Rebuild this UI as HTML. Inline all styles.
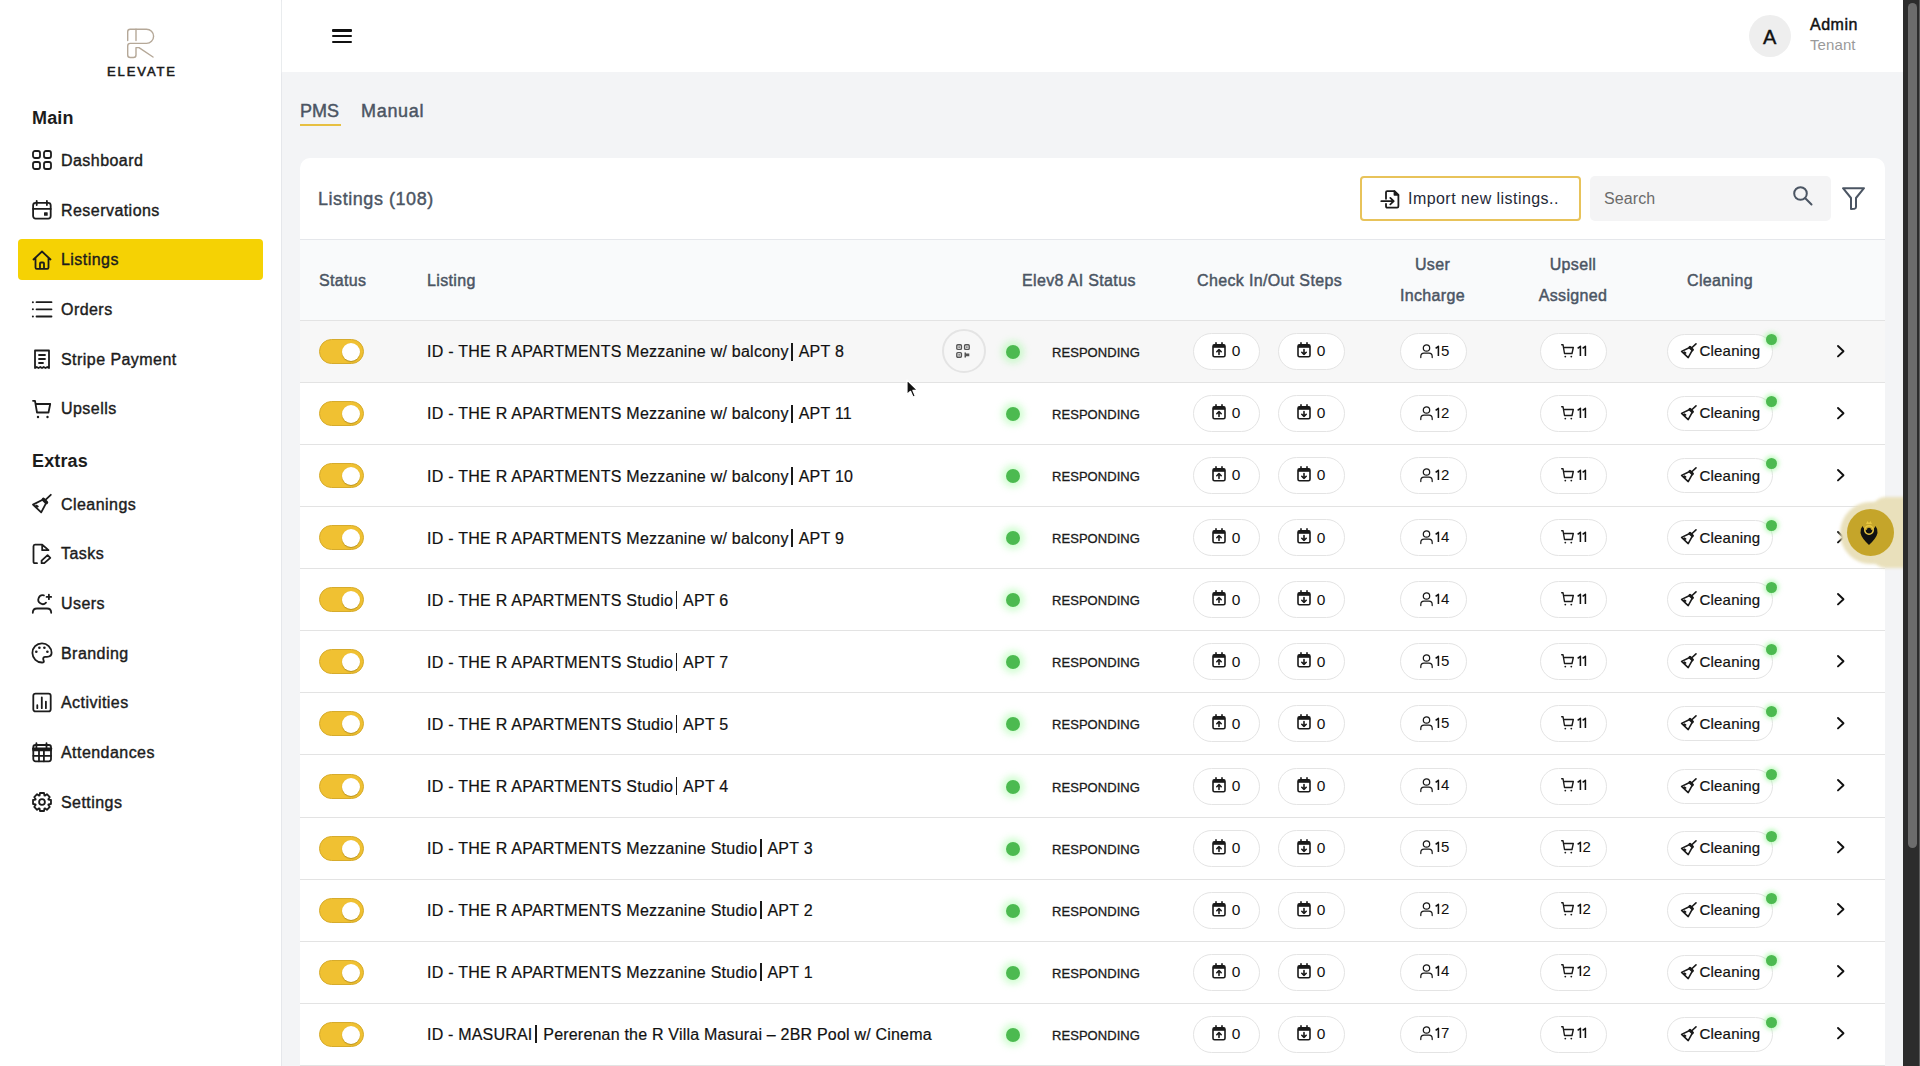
<!DOCTYPE html><html><head><meta charset="utf-8"><style>
*{box-sizing:border-box;margin:0;padding:0}
html,body{width:1920px;height:1066px;overflow:hidden;background:#f3f4f6;font-family:"Liberation Sans", sans-serif;}
.a{position:absolute;white-space:nowrap;line-height:1}
.bl{display:inline-block;line-height:0;vertical-align:baseline}
.ic{position:absolute;overflow:visible}
#sb{position:absolute;left:0;top:0;width:282px;height:1066px;background:#fff;border-right:1px solid #e5e7eb}
#tb{position:absolute;left:282px;top:0;width:1621px;height:72px;background:#fff;box-shadow:0 1px 2px rgba(243,244,246,1)}
#scr{position:absolute;left:1903px;top:0;width:17px;height:1066px;background:#2c2c2c;border-right:1px solid #5c5c5c}
#thumb{position:absolute;left:5px;top:3px;width:9px;height:845px;border-radius:5px;background:#6c6c6c}
.nav{font-size:16px;letter-spacing:.45px;color:#1c1c1c;-webkit-text-stroke:.4px #1c1c1c}
.sec{font-size:18px;font-weight:bold;color:#1c1c1c;letter-spacing:.15px}
#card{position:absolute;left:300px;top:158px;width:1585px;height:1000px;background:#fff;border-radius:10px}
.th{font-size:16px;letter-spacing:.35px;color:#4b5563;-webkit-text-stroke:.45px #4b5563}
.row{position:absolute;left:300px;width:1585px;height:62px;border-bottom:1px solid #e3e3e3;background:#fff}
.tog{position:absolute;left:19px;top:18px;width:45px;height:25px;border-radius:13px;background:#f0c132;border:1px solid #d6ab2c}
.tog i{position:absolute;left:22px;top:3px;width:18px;height:18px;border-radius:50%;background:#fff;box-shadow:0 1px 1px rgba(120,90,0,.45)}
.nm{font-size:16px;letter-spacing:.3px;color:#111;-webkit-text-stroke:.2px #111}
.pp{display:inline-block;width:1.6px;height:18px;background:#1a1a1a;vertical-align:baseline;margin:-18px 2px 0 2.5px;position:relative;top:3.2px}
.dot{position:absolute;left:706px;top:24px;width:14px;height:14px;border-radius:50%;background:#4cba50;box-shadow:0 0 7px 4px rgba(150,250,150,.45)}
.resp{font-size:13px;color:#1a1a1a;letter-spacing:.05px;-webkit-text-stroke:.3px #1a1a1a}
.pill{position:absolute;top:12px;height:37px;width:67px;border:1px solid #e4e4e4;border-radius:19px;background:#fff}
.pt{font-size:14.5px;color:#111}
.cl{position:absolute;left:1367px;top:13px;width:106px;height:35px;border:1px solid #e4e4e4;border-radius:18px;background:#fff}
.gd{position:absolute;left:1466px;top:13px;width:11px;height:11px;border-radius:50%;background:#4cba50;box-shadow:0 0 4px 2px rgba(130,245,130,.5)}
</style></head><body>
<div id="sb"></div>
<svg class="ic" style="left:120px;top:24px;width:40px;height:38px" viewBox="0 0 40 38"><g fill="none" stroke="#b5a898" stroke-width="1.4" stroke-linecap="round" stroke-linejoin="round"><path d="M7.7,16.6 V7.7 Q7.7,5.2 10.2,5.2 H26.5 A7.1,7.1 0 0 1 26.5,19.4 H10.2 Q7.7,19.4 7.7,21.9 V31 Q7.7,33.5 10.2,33.5 H13.5 Q16,33.5 16,31 V23.6 H19 L33,33"/><path d="M16,5.2 V16.6"/></g></svg>
<div class="a" style="left:107px;top:64.88px;font-size:13.0px;font-size:13px;letter-spacing:1.9px;color:#1a1a1a;-webkit-text-stroke:.55px #1a1a1a">ELEVATE</div>
<div class="a sec" style="left:32px;top:108.88px;font-size:18px;">Main</div>
<div class="a sec" style="left:32px;top:451.88px;font-size:18px;">Extras</div>
<div style="position:absolute;left:18px;top:239px;width:245px;height:41px;border-radius:4px;background:#f5d204"></div>
<svg class="ic" style="left:32px;top:150.4px;width:20px;height:20px" viewBox="0 0 20 20"><g fill="none" stroke="#1c1c1c" stroke-width="1.8" stroke-linecap="round" stroke-linejoin="round"><rect x="1" y="1" width="7" height="7" rx="2"/><rect x="12" y="1" width="7" height="7" rx="2"/><rect x="1" y="12" width="7" height="7" rx="2"/><rect x="12" y="12" width="7" height="7" rx="2"/></g></svg>
<div class="a nav" style="left:61px;top:152.96px;font-size:16px;">Dashboard</div>
<svg class="ic" style="left:32px;top:200.1px;width:20px;height:20px" viewBox="0 0 20 20"><g fill="none" stroke="#1c1c1c" stroke-width="1.8" stroke-linecap="round" stroke-linejoin="round"><rect x="1.1" y="2.9" width="17.6" height="15.7" rx="2.5"/><path d="M4.7,0.8V5M14.9,0.8V5M1.1,8.9H18.7"/></g><rect x="12" y="12.2" width="3.7" height="3.6" rx=".6" fill="#1c1c1c"/></svg>
<div class="a nav" style="left:61px;top:202.66px;font-size:16px;">Reservations</div>
<svg class="ic" style="left:32px;top:249.8px;width:20px;height:20px" viewBox="0 0 20 20"><g fill="none" stroke="#1c1c1c" stroke-width="1.8" stroke-linecap="round" stroke-linejoin="round"><path d="M1.5,9.5 L10,1.5 L18.5,9.5 M3.5,7.8 V17.5 Q3.5,18.8 4.8,18.8 H15.2 Q16.5,18.8 16.5,17.5 V7.8 M8,18.8 V13.5 Q8,12.5 9,12.5 H11 Q12,12.5 12,13.5 V18.8"/></g></svg>
<div class="a nav" style="left:61px;top:252.36px;font-size:16px;">Listings</div>
<svg class="ic" style="left:32px;top:299.5px;width:20px;height:20px" viewBox="0 0 20 20"><g fill="none" stroke="#1c1c1c" stroke-width="1.8" stroke-linecap="round" stroke-linejoin="round"><path d="M4.5,2.2H19.5M4.5,9.3H19.5M4.5,16.5H19.5"/></g><g fill="#1c1c1c"><circle cx="0.9" cy="2.2" r="1"/><circle cx="0.9" cy="9.3" r="1"/><circle cx="0.9" cy="16.5" r="1"/></g></svg>
<div class="a nav" style="left:61px;top:302.06px;font-size:16px;">Orders</div>
<svg class="ic" style="left:32px;top:349.2px;width:20px;height:20px" viewBox="0 0 20 20"><g fill="none" stroke="#1c1c1c" stroke-width="1.8" stroke-linecap="round" stroke-linejoin="round"><path d="M3,1.5 H17 V19 L15.3,18 L13.5,19 L11.7,18 L10,19 L8.3,18 L6.5,19 L4.7,18 L3,19 Z M7,6H13M7,10H13M7,14H11"/></g></svg>
<div class="a nav" style="left:61px;top:351.76px;font-size:16px;">Stripe Payment</div>
<svg class="ic" style="left:32px;top:398.9px;width:20px;height:20px" viewBox="0 0 20 20"><g fill="none" stroke="#1c1c1c" stroke-width="1.8" stroke-linecap="round" stroke-linejoin="round"><path d="M1,1.8 H3 L5,13.5 H16.5 L18.2,5 H3.8"/></g><g fill="#1c1c1c"><circle cx="6" cy="18" r="1.2"/><circle cx="15.5" cy="18" r="1.2"/></g></svg>
<div class="a nav" style="left:61px;top:401.46px;font-size:16px;">Upsells</div>
<svg class="ic" style="left:32px;top:494.0px;width:20px;height:20px" viewBox="0 0 20 20"><g fill="none" stroke="#1c1c1c" stroke-width="1.8" stroke-linecap="round" stroke-linejoin="round"><path d="M18.8,0.8 L13.2,6.2 M11.6,5.2 L14.6,8.2 L9.2,18.4 L1,10.6 Z M4.3,11.6 L5.8,12.6"/><path d="M11.4,5.4 L14.4,8.4" stroke-width="3.6"/></g></svg>
<div class="a nav" style="left:61px;top:496.56px;font-size:16px;">Cleanings</div>
<svg class="ic" style="left:32px;top:543.7px;width:20px;height:20px" viewBox="0 0 20 20"><g fill="none" stroke="#1c1c1c" stroke-width="1.8" stroke-linecap="round" stroke-linejoin="round"><path d="M5,19.2 H3 Q1.5,19.2 1.5,17.7 V2.2 Q1.5,0.6 3,0.6 H10.2 L16.5,6.2 H10.2 V0.6"/><path d="M9.6,19.2 V16.6 L15.6,11.2 L18.3,13.8 L12.3,19.2 Z"/></g></svg>
<div class="a nav" style="left:61px;top:546.26px;font-size:16px;">Tasks</div>
<svg class="ic" style="left:32px;top:593.4px;width:20px;height:20px" viewBox="0 0 20 20"><g fill="none" stroke="#1c1c1c" stroke-width="1.8" stroke-linecap="round" stroke-linejoin="round"><path d="M11.9,2.4 A4.4,4.4 0 1 0 14,9.6 M16.9,1.6 V6.2 M14.6,3.9 H19.2 M0.8,19.8 Q0.8,15.5 5,15.5 H15 Q19.2,15.5 19.2,19.8"/></g></svg>
<div class="a nav" style="left:61px;top:595.96px;font-size:16px;">Users</div>
<svg class="ic" style="left:32px;top:643.1px;width:20px;height:20px" viewBox="0 0 20 20"><g fill="none" stroke="#1c1c1c" stroke-width="1.8" stroke-linecap="round" stroke-linejoin="round"><path d="M10.2,19.5 A9.6,9.6 0 1 1 19.6,9.8 Q19.6,13.8 15,13.8 H13.2 Q11.2,13.8 11.2,15.8 Q11.2,16.8 11.7,17.6 Q12.1,18.4 11.7,19 Q11.2,19.5 10.2,19.5 Z"/></g><g fill="#1c1c1c"><circle cx="4.3" cy="8.8" r="1.3"/><circle cx="7.4" cy="4.8" r="1.3"/><circle cx="12.4" cy="4.8" r="1.3"/><circle cx="15.4" cy="8.8" r="1.3"/></g></svg>
<div class="a nav" style="left:61px;top:645.66px;font-size:16px;">Branding</div>
<svg class="ic" style="left:32px;top:692.8px;width:20px;height:20px" viewBox="0 0 20 20"><g fill="none" stroke="#1c1c1c" stroke-width="1.8" stroke-linecap="round" stroke-linejoin="round"><rect x="1.3" y="0.6" width="17.4" height="17.8" rx="2.2"/><path d="M5.3,12.2V15.2M9.8,4.3V15.2M13.9,8.6V15.2"/></g></svg>
<div class="a nav" style="left:61px;top:695.36px;font-size:16px;">Activities</div>
<svg class="ic" style="left:32px;top:742.5px;width:20px;height:20px" viewBox="0 0 20 20"><g fill="none" stroke="#1c1c1c" stroke-width="1.8" stroke-linecap="round" stroke-linejoin="round"><rect x="1.3" y="2" width="17.7" height="16.3" rx="2.2"/><path d="M4.4,0.2V4.6M14.5,0.2V4.6M1.3,7.4H19M1.3,12.8H19M7,7.4V18.3M11.9,7.4V18.3" /><path d="M1.3,5.8H19" stroke-width="2.6"/></g></svg>
<div class="a nav" style="left:61px;top:745.06px;font-size:16px;">Attendances</div>
<svg class="ic" style="left:32px;top:792.2px;width:20px;height:20px" viewBox="0 0 20 20"><g fill="none" stroke="#1c1c1c" stroke-width="1.8" stroke-linecap="round" stroke-linejoin="round"><path d="M16.46,7.57 L18.98,7.99 L18.98,12.01 L16.46,12.43 L16.29,12.85 L17.77,14.93 L14.93,17.77 L12.85,16.29 L12.43,16.46 L12.01,18.98 L7.99,18.98 L7.57,16.46 L7.15,16.29 L5.07,17.77 L2.23,14.93 L3.71,12.85 L3.54,12.43 L1.02,12.01 L1.02,7.99 L3.54,7.57 L3.71,7.15 L2.23,5.07 L5.07,2.23 L7.15,3.71 L7.57,3.54 L7.99,1.02 L12.01,1.02 L12.43,3.54 L12.85,3.71 L14.93,2.23 L17.77,5.07 L16.29,7.15 Z"/><circle cx="10" cy="10" r="2.9"/></g></svg>
<div class="a nav" style="left:61px;top:794.76px;font-size:16px;">Settings</div>
<div id="tb"></div>
<div style="position:absolute;left:332px;top:29.3px;width:20px;height:2.3px;background:#111;border-radius:1px"></div>
<div style="position:absolute;left:332px;top:35px;width:20px;height:2.1px;background:#111;border-radius:1px"></div>
<div style="position:absolute;left:332px;top:40.7px;width:20px;height:2.3px;background:#111;border-radius:1px"></div>
<div style="position:absolute;left:1749px;top:15px;width:42px;height:42px;border-radius:50%;background:#eeeeee"></div>
<div class="a" style="left:1763px;top:26.6px;font-size:20.0px;font-size:20px;color:#111;-webkit-text-stroke:.4px #111">A</div>
<div class="a" style="left:1810px;top:16.86px;font-size:16.0px;font-size:16px;color:#111;letter-spacing:.5px;-webkit-text-stroke:.45px #111">Admin</div>
<div class="a" style="left:1810px;top:37.0px;font-size:15.0px;font-size:15px;color:#9a9a9a;letter-spacing:.1px">Tenant</div>
<div id="scr"><div id="thumb"></div></div>
<div class="a" style="left:300px;top:101.88px;font-size:18.0px;font-size:18px;color:#4b5563;-webkit-text-stroke:.45px #4b5563">PMS</div>
<div class="a" style="left:361px;top:101.88px;font-size:18.0px;font-size:18px;color:#4b5563;letter-spacing:.7px;-webkit-text-stroke:.45px #4b5563">Manual</div>
<div style="position:absolute;left:300px;top:124px;width:41px;height:2px;background:#e7c042"></div>
<div id="card"></div>
<div style="position:absolute;left:300px;top:239px;width:1585px;height:1px;background:#e5e7eb"></div>
<div class="a" style="left:318px;top:189.88px;font-size:18.0px;font-size:18px;color:#4b5563;letter-spacing:.55px;-webkit-text-stroke:.4px #4b5563">Listings (108)</div>
<div style="position:absolute;left:1360px;top:176px;width:221px;height:45px;border:2px solid #e8c35a;border-radius:4px;background:#fff"></div>
<svg class="ic" style="left:1381px;top:189.5px;width:18px;height:18px" viewBox="0 0 18 18"><g fill="none" stroke="#1a1a1a" stroke-width="1.8" stroke-linecap="round" stroke-linejoin="round"><path d="M5,8.8 V2.3 Q5,1.1 6.2,1.1 H13.4 L17.4,5 V16.3 Q17.4,17.6 16.1,17.6 H6.4 Q5,17.6 5,16.2 V13.8"/><path d="M0.3,11.2 H12.6 M9.3,7.9 L12.7,11.2 L9.3,14.4"/></g><path d="M13.4,1.1 V5 H17.4 Z" fill="#1a1a1a" stroke="#1a1a1a" stroke-width="1.6" stroke-linejoin="round"/></svg>
<div class="a" style="left:1408px;top:190.86px;font-size:16.0px;font-size:16px;color:#1f2937;letter-spacing:.45px">Import new listings..</div>
<div style="position:absolute;left:1590px;top:176px;width:241px;height:45px;border-radius:5px;background:#f4f4f5"></div>
<div class="a" style="left:1604px;top:190.76px;font-size:16.0px;font-size:16px;color:#6b6b6b;letter-spacing:.1px">Search</div>
<svg class="ic" style="left:1793px;top:186px;width:20px;height:20px" viewBox="0 0 20 20"><g fill="none" stroke="#4b5563" stroke-width="2" stroke-linecap="round"><circle cx="7.5" cy="7.5" r="6.3"/><path d="M12.3,12.3 L18.5,18.5"/></g></svg>
<svg class="ic" style="left:1842px;top:187px;width:23px;height:23px" viewBox="0 0 23 23"><path d="M1,1.2 H22 L14,11 V20 Q14,21.5 12.5,21.7 L9,22 V11 Z" fill="none" stroke="#4b5563" stroke-width="2" stroke-linejoin="round"/></svg>
<div style="position:absolute;left:300px;top:240px;width:1585px;height:81px;background:#f9fafb;border-bottom:1px solid #e3e3e3"></div>
<div class="a th" style="left:319px;top:272.56px;font-size:16px;">Status</div>
<div class="a th" style="left:427px;top:272.56px;font-size:16px;">Listing</div>
<div class="a th" style="left:1022px;top:272.56px;font-size:16px;">Elev8 AI Status</div>
<div class="a th" style="left:1197px;top:272.56px;font-size:16px;">Check In/Out Steps</div>
<div class="a th" style="left:1332.5px;top:256.56px;width:200px;text-align:center;font-size:16px">User</div>
<div class="a th" style="left:1332.5px;top:288.26px;width:200px;text-align:center;font-size:16px">Incharge</div>
<div class="a th" style="left:1473px;top:256.56px;width:200px;text-align:center;font-size:16px">Upsell</div>
<div class="a th" style="left:1473px;top:288.06px;width:200px;text-align:center;font-size:16px">Assigned</div>
<div class="a th" style="left:1620px;top:272.56px;width:200px;text-align:center;font-size:16px">Cleaning</div>
<div class="row" style="top:321.0px;height:62px;background:#f7f7f7">
<div class="tog"><i></i></div>
<div class="a nm" style="left:127px;top:23.36px;letter-spacing:0.25px">ID - THE R APARTMENTS Mezzanine w/ balcony<i class=pp></i> APT 8</div>
<div style="position:absolute;left:641.5px;top:8px;width:44px;height:44px;border-radius:50%;border:2px solid #e4e4e4"></div>
<svg class="ic" style="left:655.8px;top:23.4px;width:14px;height:14px" viewBox="0 0 14 14"><g fill="none" stroke="#555" stroke-width="1.4"><rect x="0.8" y="0.8" width="4.6" height="4.6" rx="1"/><rect x="8.6" y="0.8" width="4.6" height="4.6" rx="1"/><rect x="0.8" y="8.6" width="4.6" height="4.6" rx="1"/></g><g fill="#555"><rect x="2.4" y="2.4" width="1.4" height="1.4"/><rect x="10.2" y="2.4" width="1.4" height="1.4"/><rect x="2.4" y="10.2" width="1.4" height="1.4"/><path d="M8.5,8.5 H10 V9.5 H13.3 V12.2 H10 V13.5 H8.5 Z"/></g></svg>
<div class="dot"></div>
<div class="a resp" style="left:752px;top:24.979999999999997px">RESPONDING</div>
<div class="pill" style="left:892.5px"></div>
<svg class="ic" style="left:911.5px;top:21px;width:14px;height:16px" viewBox="0 0 14 16"><g fill="none" stroke="#1a1a1a" stroke-width="1.6" stroke-linecap="round" stroke-linejoin="round"><rect x="1" y="2.8" width="12" height="12" rx="1.5"/><path d="M4,0.8V3M10,0.8V3M7,12.5V7.5M4.8,9.7L7,7.5L9.2,9.7"/></g><rect x="1" y="2.8" width="12" height="3" fill="#1a1a1a"/></svg>
<div class="a pt" style="left:931.8px;top:22.279999999999998px;font-size:15.5px">0</div>
<div class="pill" style="left:977.5px"></div>
<svg class="ic" style="left:996.5px;top:21px;width:14px;height:16px" viewBox="0 0 14 16"><g fill="none" stroke="#1a1a1a" stroke-width="1.6" stroke-linecap="round" stroke-linejoin="round"><rect x="1" y="2.8" width="12" height="12" rx="1.5"/><path d="M4,0.8V3M10,0.8V3M7,7.5V12.5M4.8,10.3L7,12.5L9.2,10.3"/></g><rect x="1" y="2.8" width="12" height="3" fill="#1a1a1a"/></svg>
<div class="a pt" style="left:1016.8px;top:22.279999999999998px;font-size:15.5px">0</div>
<div class="pill" style="left:1099.5px"></div>
<svg class="ic" style="left:1120px;top:22.5px;width:13px;height:14px" viewBox="0 0 13 14"><g fill="none" stroke="#1a1a1a" stroke-width="1.25" stroke-linecap="round"><circle cx="6.5" cy="4" r="3.2"/><path d="M0.8,13.5 V12.5 Q0.8,9.2 4,9.2 H9 Q12.2,9.2 12.2,12.5 V13.5"/></g></svg>
<div class="a pt" style="left:1135.3px;top:21.6px;font-size:15px;letter-spacing:-.3px"><svg style="display:inline-block;width:5.6px;height:11px;margin-top:-11px;vertical-align:baseline;overflow:visible" viewBox="0 0 5.6 11"><path d="M0.6,3.3 L3.4,1.3 V11" fill="none" stroke="#111" stroke-width="1.55" stroke-linejoin="round"/></svg>5</div>
<div class="pill" style="left:1239.5px"></div>
<svg class="ic" style="left:1261px;top:22.5px;width:13px;height:14px" viewBox="0 0 13 14"><g fill="none" stroke="#1a1a1a" stroke-width="1.4" stroke-linecap="round" stroke-linejoin="round"><path d="M0.7,0.7 H2 L3.5,9.5 H11 L12.3,3.5 H2.8"/></g><g fill="#1a1a1a"><circle cx="4.3" cy="12.6" r=".9"/><circle cx="10.3" cy="12.6" r=".9"/></g></svg>
<div class="a pt" style="left:1276.8px;top:21.6px;font-size:15px;letter-spacing:-.3px"><svg style="display:inline-block;width:5.6px;height:11px;margin-top:-11px;vertical-align:baseline;overflow:visible" viewBox="0 0 5.6 11"><path d="M0.6,3.3 L3.4,1.3 V11" fill="none" stroke="#111" stroke-width="1.55" stroke-linejoin="round"/></svg><svg style="display:inline-block;width:5.6px;height:11px;margin-top:-11px;vertical-align:baseline;overflow:visible" viewBox="0 0 5.6 11"><path d="M0.6,3.3 L3.4,1.3 V11" fill="none" stroke="#111" stroke-width="1.55" stroke-linejoin="round"/></svg></div>
<div class="cl"></div>
<svg class="ic" style="left:1381px;top:22px;width:16px;height:15px" viewBox="0 0 16 15"><g fill="none" stroke="#1a1a1a" stroke-width="1.6" stroke-linecap="round" stroke-linejoin="round"><path d="M15,0.8 L10.5,5 M9.2,4.2 L11.6,6.6 L7.2,14.6 L0.6,8.4 Z M3.4,9.2 L4.6,10"/><path d="M9,4.4 L11.4,6.8" stroke-width="3"/></g></svg>
<div class="a pt" style="left:1399.5px;top:22.4px;font-size:15px;letter-spacing:.2px;-webkit-text-stroke:.2px #111">Cleaning</div>
<div class="gd"></div>
<svg class="ic" style="left:1537px;top:23.5px;width:8px;height:13px" viewBox="0 0 8 13"><path d="M1,1 L6.5,6.2 L1,11.4" fill="none" stroke="#111" stroke-width="1.9" stroke-linecap="round" stroke-linejoin="round"/></svg>
</div>
<div class="row" style="top:383.08px;height:62px;background:#fff">
<div class="tog"><i></i></div>
<div class="a nm" style="left:127px;top:23.36px;letter-spacing:0.25px">ID - THE R APARTMENTS Mezzanine w/ balcony<i class=pp></i> APT 11</div>
<div class="dot"></div>
<div class="a resp" style="left:752px;top:24.979999999999997px">RESPONDING</div>
<div class="pill" style="left:892.5px"></div>
<svg class="ic" style="left:911.5px;top:21px;width:14px;height:16px" viewBox="0 0 14 16"><g fill="none" stroke="#1a1a1a" stroke-width="1.6" stroke-linecap="round" stroke-linejoin="round"><rect x="1" y="2.8" width="12" height="12" rx="1.5"/><path d="M4,0.8V3M10,0.8V3M7,12.5V7.5M4.8,9.7L7,7.5L9.2,9.7"/></g><rect x="1" y="2.8" width="12" height="3" fill="#1a1a1a"/></svg>
<div class="a pt" style="left:931.8px;top:22.279999999999998px;font-size:15.5px">0</div>
<div class="pill" style="left:977.5px"></div>
<svg class="ic" style="left:996.5px;top:21px;width:14px;height:16px" viewBox="0 0 14 16"><g fill="none" stroke="#1a1a1a" stroke-width="1.6" stroke-linecap="round" stroke-linejoin="round"><rect x="1" y="2.8" width="12" height="12" rx="1.5"/><path d="M4,0.8V3M10,0.8V3M7,7.5V12.5M4.8,10.3L7,12.5L9.2,10.3"/></g><rect x="1" y="2.8" width="12" height="3" fill="#1a1a1a"/></svg>
<div class="a pt" style="left:1016.8px;top:22.279999999999998px;font-size:15.5px">0</div>
<div class="pill" style="left:1099.5px"></div>
<svg class="ic" style="left:1120px;top:22.5px;width:13px;height:14px" viewBox="0 0 13 14"><g fill="none" stroke="#1a1a1a" stroke-width="1.25" stroke-linecap="round"><circle cx="6.5" cy="4" r="3.2"/><path d="M0.8,13.5 V12.5 Q0.8,9.2 4,9.2 H9 Q12.2,9.2 12.2,12.5 V13.5"/></g></svg>
<div class="a pt" style="left:1135.3px;top:21.6px;font-size:15px;letter-spacing:-.3px"><svg style="display:inline-block;width:5.6px;height:11px;margin-top:-11px;vertical-align:baseline;overflow:visible" viewBox="0 0 5.6 11"><path d="M0.6,3.3 L3.4,1.3 V11" fill="none" stroke="#111" stroke-width="1.55" stroke-linejoin="round"/></svg>2</div>
<div class="pill" style="left:1239.5px"></div>
<svg class="ic" style="left:1261px;top:22.5px;width:13px;height:14px" viewBox="0 0 13 14"><g fill="none" stroke="#1a1a1a" stroke-width="1.4" stroke-linecap="round" stroke-linejoin="round"><path d="M0.7,0.7 H2 L3.5,9.5 H11 L12.3,3.5 H2.8"/></g><g fill="#1a1a1a"><circle cx="4.3" cy="12.6" r=".9"/><circle cx="10.3" cy="12.6" r=".9"/></g></svg>
<div class="a pt" style="left:1276.8px;top:21.6px;font-size:15px;letter-spacing:-.3px"><svg style="display:inline-block;width:5.6px;height:11px;margin-top:-11px;vertical-align:baseline;overflow:visible" viewBox="0 0 5.6 11"><path d="M0.6,3.3 L3.4,1.3 V11" fill="none" stroke="#111" stroke-width="1.55" stroke-linejoin="round"/></svg><svg style="display:inline-block;width:5.6px;height:11px;margin-top:-11px;vertical-align:baseline;overflow:visible" viewBox="0 0 5.6 11"><path d="M0.6,3.3 L3.4,1.3 V11" fill="none" stroke="#111" stroke-width="1.55" stroke-linejoin="round"/></svg></div>
<div class="cl"></div>
<svg class="ic" style="left:1381px;top:22px;width:16px;height:15px" viewBox="0 0 16 15"><g fill="none" stroke="#1a1a1a" stroke-width="1.6" stroke-linecap="round" stroke-linejoin="round"><path d="M15,0.8 L10.5,5 M9.2,4.2 L11.6,6.6 L7.2,14.6 L0.6,8.4 Z M3.4,9.2 L4.6,10"/><path d="M9,4.4 L11.4,6.8" stroke-width="3"/></g></svg>
<div class="a pt" style="left:1399.5px;top:22.4px;font-size:15px;letter-spacing:.2px;-webkit-text-stroke:.2px #111">Cleaning</div>
<div class="gd"></div>
<svg class="ic" style="left:1537px;top:23.5px;width:8px;height:13px" viewBox="0 0 8 13"><path d="M1,1 L6.5,6.2 L1,11.4" fill="none" stroke="#111" stroke-width="1.9" stroke-linecap="round" stroke-linejoin="round"/></svg>
</div>
<div class="row" style="top:445.16px;height:62px;background:#fff">
<div class="tog"><i></i></div>
<div class="a nm" style="left:127px;top:23.36px;letter-spacing:0.25px">ID - THE R APARTMENTS Mezzanine w/ balcony<i class=pp></i> APT 10</div>
<div class="dot"></div>
<div class="a resp" style="left:752px;top:24.979999999999997px">RESPONDING</div>
<div class="pill" style="left:892.5px"></div>
<svg class="ic" style="left:911.5px;top:21px;width:14px;height:16px" viewBox="0 0 14 16"><g fill="none" stroke="#1a1a1a" stroke-width="1.6" stroke-linecap="round" stroke-linejoin="round"><rect x="1" y="2.8" width="12" height="12" rx="1.5"/><path d="M4,0.8V3M10,0.8V3M7,12.5V7.5M4.8,9.7L7,7.5L9.2,9.7"/></g><rect x="1" y="2.8" width="12" height="3" fill="#1a1a1a"/></svg>
<div class="a pt" style="left:931.8px;top:22.279999999999998px;font-size:15.5px">0</div>
<div class="pill" style="left:977.5px"></div>
<svg class="ic" style="left:996.5px;top:21px;width:14px;height:16px" viewBox="0 0 14 16"><g fill="none" stroke="#1a1a1a" stroke-width="1.6" stroke-linecap="round" stroke-linejoin="round"><rect x="1" y="2.8" width="12" height="12" rx="1.5"/><path d="M4,0.8V3M10,0.8V3M7,7.5V12.5M4.8,10.3L7,12.5L9.2,10.3"/></g><rect x="1" y="2.8" width="12" height="3" fill="#1a1a1a"/></svg>
<div class="a pt" style="left:1016.8px;top:22.279999999999998px;font-size:15.5px">0</div>
<div class="pill" style="left:1099.5px"></div>
<svg class="ic" style="left:1120px;top:22.5px;width:13px;height:14px" viewBox="0 0 13 14"><g fill="none" stroke="#1a1a1a" stroke-width="1.25" stroke-linecap="round"><circle cx="6.5" cy="4" r="3.2"/><path d="M0.8,13.5 V12.5 Q0.8,9.2 4,9.2 H9 Q12.2,9.2 12.2,12.5 V13.5"/></g></svg>
<div class="a pt" style="left:1135.3px;top:21.6px;font-size:15px;letter-spacing:-.3px"><svg style="display:inline-block;width:5.6px;height:11px;margin-top:-11px;vertical-align:baseline;overflow:visible" viewBox="0 0 5.6 11"><path d="M0.6,3.3 L3.4,1.3 V11" fill="none" stroke="#111" stroke-width="1.55" stroke-linejoin="round"/></svg>2</div>
<div class="pill" style="left:1239.5px"></div>
<svg class="ic" style="left:1261px;top:22.5px;width:13px;height:14px" viewBox="0 0 13 14"><g fill="none" stroke="#1a1a1a" stroke-width="1.4" stroke-linecap="round" stroke-linejoin="round"><path d="M0.7,0.7 H2 L3.5,9.5 H11 L12.3,3.5 H2.8"/></g><g fill="#1a1a1a"><circle cx="4.3" cy="12.6" r=".9"/><circle cx="10.3" cy="12.6" r=".9"/></g></svg>
<div class="a pt" style="left:1276.8px;top:21.6px;font-size:15px;letter-spacing:-.3px"><svg style="display:inline-block;width:5.6px;height:11px;margin-top:-11px;vertical-align:baseline;overflow:visible" viewBox="0 0 5.6 11"><path d="M0.6,3.3 L3.4,1.3 V11" fill="none" stroke="#111" stroke-width="1.55" stroke-linejoin="round"/></svg><svg style="display:inline-block;width:5.6px;height:11px;margin-top:-11px;vertical-align:baseline;overflow:visible" viewBox="0 0 5.6 11"><path d="M0.6,3.3 L3.4,1.3 V11" fill="none" stroke="#111" stroke-width="1.55" stroke-linejoin="round"/></svg></div>
<div class="cl"></div>
<svg class="ic" style="left:1381px;top:22px;width:16px;height:15px" viewBox="0 0 16 15"><g fill="none" stroke="#1a1a1a" stroke-width="1.6" stroke-linecap="round" stroke-linejoin="round"><path d="M15,0.8 L10.5,5 M9.2,4.2 L11.6,6.6 L7.2,14.6 L0.6,8.4 Z M3.4,9.2 L4.6,10"/><path d="M9,4.4 L11.4,6.8" stroke-width="3"/></g></svg>
<div class="a pt" style="left:1399.5px;top:22.4px;font-size:15px;letter-spacing:.2px;-webkit-text-stroke:.2px #111">Cleaning</div>
<div class="gd"></div>
<svg class="ic" style="left:1537px;top:23.5px;width:8px;height:13px" viewBox="0 0 8 13"><path d="M1,1 L6.5,6.2 L1,11.4" fill="none" stroke="#111" stroke-width="1.9" stroke-linecap="round" stroke-linejoin="round"/></svg>
</div>
<div class="row" style="top:507.24px;height:62px;background:#fff">
<div class="tog"><i></i></div>
<div class="a nm" style="left:127px;top:23.36px;letter-spacing:0.25px">ID - THE R APARTMENTS Mezzanine w/ balcony<i class=pp></i> APT 9</div>
<div class="dot"></div>
<div class="a resp" style="left:752px;top:24.979999999999997px">RESPONDING</div>
<div class="pill" style="left:892.5px"></div>
<svg class="ic" style="left:911.5px;top:21px;width:14px;height:16px" viewBox="0 0 14 16"><g fill="none" stroke="#1a1a1a" stroke-width="1.6" stroke-linecap="round" stroke-linejoin="round"><rect x="1" y="2.8" width="12" height="12" rx="1.5"/><path d="M4,0.8V3M10,0.8V3M7,12.5V7.5M4.8,9.7L7,7.5L9.2,9.7"/></g><rect x="1" y="2.8" width="12" height="3" fill="#1a1a1a"/></svg>
<div class="a pt" style="left:931.8px;top:22.279999999999998px;font-size:15.5px">0</div>
<div class="pill" style="left:977.5px"></div>
<svg class="ic" style="left:996.5px;top:21px;width:14px;height:16px" viewBox="0 0 14 16"><g fill="none" stroke="#1a1a1a" stroke-width="1.6" stroke-linecap="round" stroke-linejoin="round"><rect x="1" y="2.8" width="12" height="12" rx="1.5"/><path d="M4,0.8V3M10,0.8V3M7,7.5V12.5M4.8,10.3L7,12.5L9.2,10.3"/></g><rect x="1" y="2.8" width="12" height="3" fill="#1a1a1a"/></svg>
<div class="a pt" style="left:1016.8px;top:22.279999999999998px;font-size:15.5px">0</div>
<div class="pill" style="left:1099.5px"></div>
<svg class="ic" style="left:1120px;top:22.5px;width:13px;height:14px" viewBox="0 0 13 14"><g fill="none" stroke="#1a1a1a" stroke-width="1.25" stroke-linecap="round"><circle cx="6.5" cy="4" r="3.2"/><path d="M0.8,13.5 V12.5 Q0.8,9.2 4,9.2 H9 Q12.2,9.2 12.2,12.5 V13.5"/></g></svg>
<div class="a pt" style="left:1135.3px;top:21.6px;font-size:15px;letter-spacing:-.3px"><svg style="display:inline-block;width:5.6px;height:11px;margin-top:-11px;vertical-align:baseline;overflow:visible" viewBox="0 0 5.6 11"><path d="M0.6,3.3 L3.4,1.3 V11" fill="none" stroke="#111" stroke-width="1.55" stroke-linejoin="round"/></svg>4</div>
<div class="pill" style="left:1239.5px"></div>
<svg class="ic" style="left:1261px;top:22.5px;width:13px;height:14px" viewBox="0 0 13 14"><g fill="none" stroke="#1a1a1a" stroke-width="1.4" stroke-linecap="round" stroke-linejoin="round"><path d="M0.7,0.7 H2 L3.5,9.5 H11 L12.3,3.5 H2.8"/></g><g fill="#1a1a1a"><circle cx="4.3" cy="12.6" r=".9"/><circle cx="10.3" cy="12.6" r=".9"/></g></svg>
<div class="a pt" style="left:1276.8px;top:21.6px;font-size:15px;letter-spacing:-.3px"><svg style="display:inline-block;width:5.6px;height:11px;margin-top:-11px;vertical-align:baseline;overflow:visible" viewBox="0 0 5.6 11"><path d="M0.6,3.3 L3.4,1.3 V11" fill="none" stroke="#111" stroke-width="1.55" stroke-linejoin="round"/></svg><svg style="display:inline-block;width:5.6px;height:11px;margin-top:-11px;vertical-align:baseline;overflow:visible" viewBox="0 0 5.6 11"><path d="M0.6,3.3 L3.4,1.3 V11" fill="none" stroke="#111" stroke-width="1.55" stroke-linejoin="round"/></svg></div>
<div class="cl"></div>
<svg class="ic" style="left:1381px;top:22px;width:16px;height:15px" viewBox="0 0 16 15"><g fill="none" stroke="#1a1a1a" stroke-width="1.6" stroke-linecap="round" stroke-linejoin="round"><path d="M15,0.8 L10.5,5 M9.2,4.2 L11.6,6.6 L7.2,14.6 L0.6,8.4 Z M3.4,9.2 L4.6,10"/><path d="M9,4.4 L11.4,6.8" stroke-width="3"/></g></svg>
<div class="a pt" style="left:1399.5px;top:22.4px;font-size:15px;letter-spacing:.2px;-webkit-text-stroke:.2px #111">Cleaning</div>
<div class="gd"></div>
<svg class="ic" style="left:1537px;top:23.5px;width:8px;height:13px" viewBox="0 0 8 13"><path d="M1,1 L6.5,6.2 L1,11.4" fill="none" stroke="#111" stroke-width="1.9" stroke-linecap="round" stroke-linejoin="round"/></svg>
</div>
<div class="row" style="top:569.32px;height:62px;background:#fff">
<div class="tog"><i></i></div>
<div class="a nm" style="left:127px;top:23.36px;letter-spacing:0.25px">ID - THE R APARTMENTS Studio<i class=pp></i> APT 6</div>
<div class="dot"></div>
<div class="a resp" style="left:752px;top:24.979999999999997px">RESPONDING</div>
<div class="pill" style="left:892.5px"></div>
<svg class="ic" style="left:911.5px;top:21px;width:14px;height:16px" viewBox="0 0 14 16"><g fill="none" stroke="#1a1a1a" stroke-width="1.6" stroke-linecap="round" stroke-linejoin="round"><rect x="1" y="2.8" width="12" height="12" rx="1.5"/><path d="M4,0.8V3M10,0.8V3M7,12.5V7.5M4.8,9.7L7,7.5L9.2,9.7"/></g><rect x="1" y="2.8" width="12" height="3" fill="#1a1a1a"/></svg>
<div class="a pt" style="left:931.8px;top:22.279999999999998px;font-size:15.5px">0</div>
<div class="pill" style="left:977.5px"></div>
<svg class="ic" style="left:996.5px;top:21px;width:14px;height:16px" viewBox="0 0 14 16"><g fill="none" stroke="#1a1a1a" stroke-width="1.6" stroke-linecap="round" stroke-linejoin="round"><rect x="1" y="2.8" width="12" height="12" rx="1.5"/><path d="M4,0.8V3M10,0.8V3M7,7.5V12.5M4.8,10.3L7,12.5L9.2,10.3"/></g><rect x="1" y="2.8" width="12" height="3" fill="#1a1a1a"/></svg>
<div class="a pt" style="left:1016.8px;top:22.279999999999998px;font-size:15.5px">0</div>
<div class="pill" style="left:1099.5px"></div>
<svg class="ic" style="left:1120px;top:22.5px;width:13px;height:14px" viewBox="0 0 13 14"><g fill="none" stroke="#1a1a1a" stroke-width="1.25" stroke-linecap="round"><circle cx="6.5" cy="4" r="3.2"/><path d="M0.8,13.5 V12.5 Q0.8,9.2 4,9.2 H9 Q12.2,9.2 12.2,12.5 V13.5"/></g></svg>
<div class="a pt" style="left:1135.3px;top:21.6px;font-size:15px;letter-spacing:-.3px"><svg style="display:inline-block;width:5.6px;height:11px;margin-top:-11px;vertical-align:baseline;overflow:visible" viewBox="0 0 5.6 11"><path d="M0.6,3.3 L3.4,1.3 V11" fill="none" stroke="#111" stroke-width="1.55" stroke-linejoin="round"/></svg>4</div>
<div class="pill" style="left:1239.5px"></div>
<svg class="ic" style="left:1261px;top:22.5px;width:13px;height:14px" viewBox="0 0 13 14"><g fill="none" stroke="#1a1a1a" stroke-width="1.4" stroke-linecap="round" stroke-linejoin="round"><path d="M0.7,0.7 H2 L3.5,9.5 H11 L12.3,3.5 H2.8"/></g><g fill="#1a1a1a"><circle cx="4.3" cy="12.6" r=".9"/><circle cx="10.3" cy="12.6" r=".9"/></g></svg>
<div class="a pt" style="left:1276.8px;top:21.6px;font-size:15px;letter-spacing:-.3px"><svg style="display:inline-block;width:5.6px;height:11px;margin-top:-11px;vertical-align:baseline;overflow:visible" viewBox="0 0 5.6 11"><path d="M0.6,3.3 L3.4,1.3 V11" fill="none" stroke="#111" stroke-width="1.55" stroke-linejoin="round"/></svg><svg style="display:inline-block;width:5.6px;height:11px;margin-top:-11px;vertical-align:baseline;overflow:visible" viewBox="0 0 5.6 11"><path d="M0.6,3.3 L3.4,1.3 V11" fill="none" stroke="#111" stroke-width="1.55" stroke-linejoin="round"/></svg></div>
<div class="cl"></div>
<svg class="ic" style="left:1381px;top:22px;width:16px;height:15px" viewBox="0 0 16 15"><g fill="none" stroke="#1a1a1a" stroke-width="1.6" stroke-linecap="round" stroke-linejoin="round"><path d="M15,0.8 L10.5,5 M9.2,4.2 L11.6,6.6 L7.2,14.6 L0.6,8.4 Z M3.4,9.2 L4.6,10"/><path d="M9,4.4 L11.4,6.8" stroke-width="3"/></g></svg>
<div class="a pt" style="left:1399.5px;top:22.4px;font-size:15px;letter-spacing:.2px;-webkit-text-stroke:.2px #111">Cleaning</div>
<div class="gd"></div>
<svg class="ic" style="left:1537px;top:23.5px;width:8px;height:13px" viewBox="0 0 8 13"><path d="M1,1 L6.5,6.2 L1,11.4" fill="none" stroke="#111" stroke-width="1.9" stroke-linecap="round" stroke-linejoin="round"/></svg>
</div>
<div class="row" style="top:631.4px;height:62px;background:#fff">
<div class="tog"><i></i></div>
<div class="a nm" style="left:127px;top:23.36px;letter-spacing:0.25px">ID - THE R APARTMENTS Studio<i class=pp></i> APT 7</div>
<div class="dot"></div>
<div class="a resp" style="left:752px;top:24.979999999999997px">RESPONDING</div>
<div class="pill" style="left:892.5px"></div>
<svg class="ic" style="left:911.5px;top:21px;width:14px;height:16px" viewBox="0 0 14 16"><g fill="none" stroke="#1a1a1a" stroke-width="1.6" stroke-linecap="round" stroke-linejoin="round"><rect x="1" y="2.8" width="12" height="12" rx="1.5"/><path d="M4,0.8V3M10,0.8V3M7,12.5V7.5M4.8,9.7L7,7.5L9.2,9.7"/></g><rect x="1" y="2.8" width="12" height="3" fill="#1a1a1a"/></svg>
<div class="a pt" style="left:931.8px;top:22.279999999999998px;font-size:15.5px">0</div>
<div class="pill" style="left:977.5px"></div>
<svg class="ic" style="left:996.5px;top:21px;width:14px;height:16px" viewBox="0 0 14 16"><g fill="none" stroke="#1a1a1a" stroke-width="1.6" stroke-linecap="round" stroke-linejoin="round"><rect x="1" y="2.8" width="12" height="12" rx="1.5"/><path d="M4,0.8V3M10,0.8V3M7,7.5V12.5M4.8,10.3L7,12.5L9.2,10.3"/></g><rect x="1" y="2.8" width="12" height="3" fill="#1a1a1a"/></svg>
<div class="a pt" style="left:1016.8px;top:22.279999999999998px;font-size:15.5px">0</div>
<div class="pill" style="left:1099.5px"></div>
<svg class="ic" style="left:1120px;top:22.5px;width:13px;height:14px" viewBox="0 0 13 14"><g fill="none" stroke="#1a1a1a" stroke-width="1.25" stroke-linecap="round"><circle cx="6.5" cy="4" r="3.2"/><path d="M0.8,13.5 V12.5 Q0.8,9.2 4,9.2 H9 Q12.2,9.2 12.2,12.5 V13.5"/></g></svg>
<div class="a pt" style="left:1135.3px;top:21.6px;font-size:15px;letter-spacing:-.3px"><svg style="display:inline-block;width:5.6px;height:11px;margin-top:-11px;vertical-align:baseline;overflow:visible" viewBox="0 0 5.6 11"><path d="M0.6,3.3 L3.4,1.3 V11" fill="none" stroke="#111" stroke-width="1.55" stroke-linejoin="round"/></svg>5</div>
<div class="pill" style="left:1239.5px"></div>
<svg class="ic" style="left:1261px;top:22.5px;width:13px;height:14px" viewBox="0 0 13 14"><g fill="none" stroke="#1a1a1a" stroke-width="1.4" stroke-linecap="round" stroke-linejoin="round"><path d="M0.7,0.7 H2 L3.5,9.5 H11 L12.3,3.5 H2.8"/></g><g fill="#1a1a1a"><circle cx="4.3" cy="12.6" r=".9"/><circle cx="10.3" cy="12.6" r=".9"/></g></svg>
<div class="a pt" style="left:1276.8px;top:21.6px;font-size:15px;letter-spacing:-.3px"><svg style="display:inline-block;width:5.6px;height:11px;margin-top:-11px;vertical-align:baseline;overflow:visible" viewBox="0 0 5.6 11"><path d="M0.6,3.3 L3.4,1.3 V11" fill="none" stroke="#111" stroke-width="1.55" stroke-linejoin="round"/></svg><svg style="display:inline-block;width:5.6px;height:11px;margin-top:-11px;vertical-align:baseline;overflow:visible" viewBox="0 0 5.6 11"><path d="M0.6,3.3 L3.4,1.3 V11" fill="none" stroke="#111" stroke-width="1.55" stroke-linejoin="round"/></svg></div>
<div class="cl"></div>
<svg class="ic" style="left:1381px;top:22px;width:16px;height:15px" viewBox="0 0 16 15"><g fill="none" stroke="#1a1a1a" stroke-width="1.6" stroke-linecap="round" stroke-linejoin="round"><path d="M15,0.8 L10.5,5 M9.2,4.2 L11.6,6.6 L7.2,14.6 L0.6,8.4 Z M3.4,9.2 L4.6,10"/><path d="M9,4.4 L11.4,6.8" stroke-width="3"/></g></svg>
<div class="a pt" style="left:1399.5px;top:22.4px;font-size:15px;letter-spacing:.2px;-webkit-text-stroke:.2px #111">Cleaning</div>
<div class="gd"></div>
<svg class="ic" style="left:1537px;top:23.5px;width:8px;height:13px" viewBox="0 0 8 13"><path d="M1,1 L6.5,6.2 L1,11.4" fill="none" stroke="#111" stroke-width="1.9" stroke-linecap="round" stroke-linejoin="round"/></svg>
</div>
<div class="row" style="top:693.48px;height:62px;background:#fff">
<div class="tog"><i></i></div>
<div class="a nm" style="left:127px;top:23.36px;letter-spacing:0.25px">ID - THE R APARTMENTS Studio<i class=pp></i> APT 5</div>
<div class="dot"></div>
<div class="a resp" style="left:752px;top:24.979999999999997px">RESPONDING</div>
<div class="pill" style="left:892.5px"></div>
<svg class="ic" style="left:911.5px;top:21px;width:14px;height:16px" viewBox="0 0 14 16"><g fill="none" stroke="#1a1a1a" stroke-width="1.6" stroke-linecap="round" stroke-linejoin="round"><rect x="1" y="2.8" width="12" height="12" rx="1.5"/><path d="M4,0.8V3M10,0.8V3M7,12.5V7.5M4.8,9.7L7,7.5L9.2,9.7"/></g><rect x="1" y="2.8" width="12" height="3" fill="#1a1a1a"/></svg>
<div class="a pt" style="left:931.8px;top:22.279999999999998px;font-size:15.5px">0</div>
<div class="pill" style="left:977.5px"></div>
<svg class="ic" style="left:996.5px;top:21px;width:14px;height:16px" viewBox="0 0 14 16"><g fill="none" stroke="#1a1a1a" stroke-width="1.6" stroke-linecap="round" stroke-linejoin="round"><rect x="1" y="2.8" width="12" height="12" rx="1.5"/><path d="M4,0.8V3M10,0.8V3M7,7.5V12.5M4.8,10.3L7,12.5L9.2,10.3"/></g><rect x="1" y="2.8" width="12" height="3" fill="#1a1a1a"/></svg>
<div class="a pt" style="left:1016.8px;top:22.279999999999998px;font-size:15.5px">0</div>
<div class="pill" style="left:1099.5px"></div>
<svg class="ic" style="left:1120px;top:22.5px;width:13px;height:14px" viewBox="0 0 13 14"><g fill="none" stroke="#1a1a1a" stroke-width="1.25" stroke-linecap="round"><circle cx="6.5" cy="4" r="3.2"/><path d="M0.8,13.5 V12.5 Q0.8,9.2 4,9.2 H9 Q12.2,9.2 12.2,12.5 V13.5"/></g></svg>
<div class="a pt" style="left:1135.3px;top:21.6px;font-size:15px;letter-spacing:-.3px"><svg style="display:inline-block;width:5.6px;height:11px;margin-top:-11px;vertical-align:baseline;overflow:visible" viewBox="0 0 5.6 11"><path d="M0.6,3.3 L3.4,1.3 V11" fill="none" stroke="#111" stroke-width="1.55" stroke-linejoin="round"/></svg>5</div>
<div class="pill" style="left:1239.5px"></div>
<svg class="ic" style="left:1261px;top:22.5px;width:13px;height:14px" viewBox="0 0 13 14"><g fill="none" stroke="#1a1a1a" stroke-width="1.4" stroke-linecap="round" stroke-linejoin="round"><path d="M0.7,0.7 H2 L3.5,9.5 H11 L12.3,3.5 H2.8"/></g><g fill="#1a1a1a"><circle cx="4.3" cy="12.6" r=".9"/><circle cx="10.3" cy="12.6" r=".9"/></g></svg>
<div class="a pt" style="left:1276.8px;top:21.6px;font-size:15px;letter-spacing:-.3px"><svg style="display:inline-block;width:5.6px;height:11px;margin-top:-11px;vertical-align:baseline;overflow:visible" viewBox="0 0 5.6 11"><path d="M0.6,3.3 L3.4,1.3 V11" fill="none" stroke="#111" stroke-width="1.55" stroke-linejoin="round"/></svg><svg style="display:inline-block;width:5.6px;height:11px;margin-top:-11px;vertical-align:baseline;overflow:visible" viewBox="0 0 5.6 11"><path d="M0.6,3.3 L3.4,1.3 V11" fill="none" stroke="#111" stroke-width="1.55" stroke-linejoin="round"/></svg></div>
<div class="cl"></div>
<svg class="ic" style="left:1381px;top:22px;width:16px;height:15px" viewBox="0 0 16 15"><g fill="none" stroke="#1a1a1a" stroke-width="1.6" stroke-linecap="round" stroke-linejoin="round"><path d="M15,0.8 L10.5,5 M9.2,4.2 L11.6,6.6 L7.2,14.6 L0.6,8.4 Z M3.4,9.2 L4.6,10"/><path d="M9,4.4 L11.4,6.8" stroke-width="3"/></g></svg>
<div class="a pt" style="left:1399.5px;top:22.4px;font-size:15px;letter-spacing:.2px;-webkit-text-stroke:.2px #111">Cleaning</div>
<div class="gd"></div>
<svg class="ic" style="left:1537px;top:23.5px;width:8px;height:13px" viewBox="0 0 8 13"><path d="M1,1 L6.5,6.2 L1,11.4" fill="none" stroke="#111" stroke-width="1.9" stroke-linecap="round" stroke-linejoin="round"/></svg>
</div>
<div class="row" style="top:755.56px;height:62px;background:#fff">
<div class="tog"><i></i></div>
<div class="a nm" style="left:127px;top:23.36px;letter-spacing:0.25px">ID - THE R APARTMENTS Studio<i class=pp></i> APT 4</div>
<div class="dot"></div>
<div class="a resp" style="left:752px;top:24.979999999999997px">RESPONDING</div>
<div class="pill" style="left:892.5px"></div>
<svg class="ic" style="left:911.5px;top:21px;width:14px;height:16px" viewBox="0 0 14 16"><g fill="none" stroke="#1a1a1a" stroke-width="1.6" stroke-linecap="round" stroke-linejoin="round"><rect x="1" y="2.8" width="12" height="12" rx="1.5"/><path d="M4,0.8V3M10,0.8V3M7,12.5V7.5M4.8,9.7L7,7.5L9.2,9.7"/></g><rect x="1" y="2.8" width="12" height="3" fill="#1a1a1a"/></svg>
<div class="a pt" style="left:931.8px;top:22.279999999999998px;font-size:15.5px">0</div>
<div class="pill" style="left:977.5px"></div>
<svg class="ic" style="left:996.5px;top:21px;width:14px;height:16px" viewBox="0 0 14 16"><g fill="none" stroke="#1a1a1a" stroke-width="1.6" stroke-linecap="round" stroke-linejoin="round"><rect x="1" y="2.8" width="12" height="12" rx="1.5"/><path d="M4,0.8V3M10,0.8V3M7,7.5V12.5M4.8,10.3L7,12.5L9.2,10.3"/></g><rect x="1" y="2.8" width="12" height="3" fill="#1a1a1a"/></svg>
<div class="a pt" style="left:1016.8px;top:22.279999999999998px;font-size:15.5px">0</div>
<div class="pill" style="left:1099.5px"></div>
<svg class="ic" style="left:1120px;top:22.5px;width:13px;height:14px" viewBox="0 0 13 14"><g fill="none" stroke="#1a1a1a" stroke-width="1.25" stroke-linecap="round"><circle cx="6.5" cy="4" r="3.2"/><path d="M0.8,13.5 V12.5 Q0.8,9.2 4,9.2 H9 Q12.2,9.2 12.2,12.5 V13.5"/></g></svg>
<div class="a pt" style="left:1135.3px;top:21.6px;font-size:15px;letter-spacing:-.3px"><svg style="display:inline-block;width:5.6px;height:11px;margin-top:-11px;vertical-align:baseline;overflow:visible" viewBox="0 0 5.6 11"><path d="M0.6,3.3 L3.4,1.3 V11" fill="none" stroke="#111" stroke-width="1.55" stroke-linejoin="round"/></svg>4</div>
<div class="pill" style="left:1239.5px"></div>
<svg class="ic" style="left:1261px;top:22.5px;width:13px;height:14px" viewBox="0 0 13 14"><g fill="none" stroke="#1a1a1a" stroke-width="1.4" stroke-linecap="round" stroke-linejoin="round"><path d="M0.7,0.7 H2 L3.5,9.5 H11 L12.3,3.5 H2.8"/></g><g fill="#1a1a1a"><circle cx="4.3" cy="12.6" r=".9"/><circle cx="10.3" cy="12.6" r=".9"/></g></svg>
<div class="a pt" style="left:1276.8px;top:21.6px;font-size:15px;letter-spacing:-.3px"><svg style="display:inline-block;width:5.6px;height:11px;margin-top:-11px;vertical-align:baseline;overflow:visible" viewBox="0 0 5.6 11"><path d="M0.6,3.3 L3.4,1.3 V11" fill="none" stroke="#111" stroke-width="1.55" stroke-linejoin="round"/></svg><svg style="display:inline-block;width:5.6px;height:11px;margin-top:-11px;vertical-align:baseline;overflow:visible" viewBox="0 0 5.6 11"><path d="M0.6,3.3 L3.4,1.3 V11" fill="none" stroke="#111" stroke-width="1.55" stroke-linejoin="round"/></svg></div>
<div class="cl"></div>
<svg class="ic" style="left:1381px;top:22px;width:16px;height:15px" viewBox="0 0 16 15"><g fill="none" stroke="#1a1a1a" stroke-width="1.6" stroke-linecap="round" stroke-linejoin="round"><path d="M15,0.8 L10.5,5 M9.2,4.2 L11.6,6.6 L7.2,14.6 L0.6,8.4 Z M3.4,9.2 L4.6,10"/><path d="M9,4.4 L11.4,6.8" stroke-width="3"/></g></svg>
<div class="a pt" style="left:1399.5px;top:22.4px;font-size:15px;letter-spacing:.2px;-webkit-text-stroke:.2px #111">Cleaning</div>
<div class="gd"></div>
<svg class="ic" style="left:1537px;top:23.5px;width:8px;height:13px" viewBox="0 0 8 13"><path d="M1,1 L6.5,6.2 L1,11.4" fill="none" stroke="#111" stroke-width="1.9" stroke-linecap="round" stroke-linejoin="round"/></svg>
</div>
<div class="row" style="top:817.64px;height:62px;background:#fff">
<div class="tog"><i></i></div>
<div class="a nm" style="left:127px;top:23.36px;letter-spacing:0.25px">ID - THE R APARTMENTS Mezzanine Studio<i class=pp></i> APT 3</div>
<div class="dot"></div>
<div class="a resp" style="left:752px;top:24.979999999999997px">RESPONDING</div>
<div class="pill" style="left:892.5px"></div>
<svg class="ic" style="left:911.5px;top:21px;width:14px;height:16px" viewBox="0 0 14 16"><g fill="none" stroke="#1a1a1a" stroke-width="1.6" stroke-linecap="round" stroke-linejoin="round"><rect x="1" y="2.8" width="12" height="12" rx="1.5"/><path d="M4,0.8V3M10,0.8V3M7,12.5V7.5M4.8,9.7L7,7.5L9.2,9.7"/></g><rect x="1" y="2.8" width="12" height="3" fill="#1a1a1a"/></svg>
<div class="a pt" style="left:931.8px;top:22.279999999999998px;font-size:15.5px">0</div>
<div class="pill" style="left:977.5px"></div>
<svg class="ic" style="left:996.5px;top:21px;width:14px;height:16px" viewBox="0 0 14 16"><g fill="none" stroke="#1a1a1a" stroke-width="1.6" stroke-linecap="round" stroke-linejoin="round"><rect x="1" y="2.8" width="12" height="12" rx="1.5"/><path d="M4,0.8V3M10,0.8V3M7,7.5V12.5M4.8,10.3L7,12.5L9.2,10.3"/></g><rect x="1" y="2.8" width="12" height="3" fill="#1a1a1a"/></svg>
<div class="a pt" style="left:1016.8px;top:22.279999999999998px;font-size:15.5px">0</div>
<div class="pill" style="left:1099.5px"></div>
<svg class="ic" style="left:1120px;top:22.5px;width:13px;height:14px" viewBox="0 0 13 14"><g fill="none" stroke="#1a1a1a" stroke-width="1.25" stroke-linecap="round"><circle cx="6.5" cy="4" r="3.2"/><path d="M0.8,13.5 V12.5 Q0.8,9.2 4,9.2 H9 Q12.2,9.2 12.2,12.5 V13.5"/></g></svg>
<div class="a pt" style="left:1135.3px;top:21.6px;font-size:15px;letter-spacing:-.3px"><svg style="display:inline-block;width:5.6px;height:11px;margin-top:-11px;vertical-align:baseline;overflow:visible" viewBox="0 0 5.6 11"><path d="M0.6,3.3 L3.4,1.3 V11" fill="none" stroke="#111" stroke-width="1.55" stroke-linejoin="round"/></svg>5</div>
<div class="pill" style="left:1239.5px"></div>
<svg class="ic" style="left:1261px;top:22.5px;width:13px;height:14px" viewBox="0 0 13 14"><g fill="none" stroke="#1a1a1a" stroke-width="1.4" stroke-linecap="round" stroke-linejoin="round"><path d="M0.7,0.7 H2 L3.5,9.5 H11 L12.3,3.5 H2.8"/></g><g fill="#1a1a1a"><circle cx="4.3" cy="12.6" r=".9"/><circle cx="10.3" cy="12.6" r=".9"/></g></svg>
<div class="a pt" style="left:1276.8px;top:21.6px;font-size:15px;letter-spacing:-.3px"><svg style="display:inline-block;width:5.6px;height:11px;margin-top:-11px;vertical-align:baseline;overflow:visible" viewBox="0 0 5.6 11"><path d="M0.6,3.3 L3.4,1.3 V11" fill="none" stroke="#111" stroke-width="1.55" stroke-linejoin="round"/></svg>2</div>
<div class="cl"></div>
<svg class="ic" style="left:1381px;top:22px;width:16px;height:15px" viewBox="0 0 16 15"><g fill="none" stroke="#1a1a1a" stroke-width="1.6" stroke-linecap="round" stroke-linejoin="round"><path d="M15,0.8 L10.5,5 M9.2,4.2 L11.6,6.6 L7.2,14.6 L0.6,8.4 Z M3.4,9.2 L4.6,10"/><path d="M9,4.4 L11.4,6.8" stroke-width="3"/></g></svg>
<div class="a pt" style="left:1399.5px;top:22.4px;font-size:15px;letter-spacing:.2px;-webkit-text-stroke:.2px #111">Cleaning</div>
<div class="gd"></div>
<svg class="ic" style="left:1537px;top:23.5px;width:8px;height:13px" viewBox="0 0 8 13"><path d="M1,1 L6.5,6.2 L1,11.4" fill="none" stroke="#111" stroke-width="1.9" stroke-linecap="round" stroke-linejoin="round"/></svg>
</div>
<div class="row" style="top:879.72px;height:62px;background:#fff">
<div class="tog"><i></i></div>
<div class="a nm" style="left:127px;top:23.36px;letter-spacing:0.25px">ID - THE R APARTMENTS Mezzanine Studio<i class=pp></i> APT 2</div>
<div class="dot"></div>
<div class="a resp" style="left:752px;top:24.979999999999997px">RESPONDING</div>
<div class="pill" style="left:892.5px"></div>
<svg class="ic" style="left:911.5px;top:21px;width:14px;height:16px" viewBox="0 0 14 16"><g fill="none" stroke="#1a1a1a" stroke-width="1.6" stroke-linecap="round" stroke-linejoin="round"><rect x="1" y="2.8" width="12" height="12" rx="1.5"/><path d="M4,0.8V3M10,0.8V3M7,12.5V7.5M4.8,9.7L7,7.5L9.2,9.7"/></g><rect x="1" y="2.8" width="12" height="3" fill="#1a1a1a"/></svg>
<div class="a pt" style="left:931.8px;top:22.279999999999998px;font-size:15.5px">0</div>
<div class="pill" style="left:977.5px"></div>
<svg class="ic" style="left:996.5px;top:21px;width:14px;height:16px" viewBox="0 0 14 16"><g fill="none" stroke="#1a1a1a" stroke-width="1.6" stroke-linecap="round" stroke-linejoin="round"><rect x="1" y="2.8" width="12" height="12" rx="1.5"/><path d="M4,0.8V3M10,0.8V3M7,7.5V12.5M4.8,10.3L7,12.5L9.2,10.3"/></g><rect x="1" y="2.8" width="12" height="3" fill="#1a1a1a"/></svg>
<div class="a pt" style="left:1016.8px;top:22.279999999999998px;font-size:15.5px">0</div>
<div class="pill" style="left:1099.5px"></div>
<svg class="ic" style="left:1120px;top:22.5px;width:13px;height:14px" viewBox="0 0 13 14"><g fill="none" stroke="#1a1a1a" stroke-width="1.25" stroke-linecap="round"><circle cx="6.5" cy="4" r="3.2"/><path d="M0.8,13.5 V12.5 Q0.8,9.2 4,9.2 H9 Q12.2,9.2 12.2,12.5 V13.5"/></g></svg>
<div class="a pt" style="left:1135.3px;top:21.6px;font-size:15px;letter-spacing:-.3px"><svg style="display:inline-block;width:5.6px;height:11px;margin-top:-11px;vertical-align:baseline;overflow:visible" viewBox="0 0 5.6 11"><path d="M0.6,3.3 L3.4,1.3 V11" fill="none" stroke="#111" stroke-width="1.55" stroke-linejoin="round"/></svg>2</div>
<div class="pill" style="left:1239.5px"></div>
<svg class="ic" style="left:1261px;top:22.5px;width:13px;height:14px" viewBox="0 0 13 14"><g fill="none" stroke="#1a1a1a" stroke-width="1.4" stroke-linecap="round" stroke-linejoin="round"><path d="M0.7,0.7 H2 L3.5,9.5 H11 L12.3,3.5 H2.8"/></g><g fill="#1a1a1a"><circle cx="4.3" cy="12.6" r=".9"/><circle cx="10.3" cy="12.6" r=".9"/></g></svg>
<div class="a pt" style="left:1276.8px;top:21.6px;font-size:15px;letter-spacing:-.3px"><svg style="display:inline-block;width:5.6px;height:11px;margin-top:-11px;vertical-align:baseline;overflow:visible" viewBox="0 0 5.6 11"><path d="M0.6,3.3 L3.4,1.3 V11" fill="none" stroke="#111" stroke-width="1.55" stroke-linejoin="round"/></svg>2</div>
<div class="cl"></div>
<svg class="ic" style="left:1381px;top:22px;width:16px;height:15px" viewBox="0 0 16 15"><g fill="none" stroke="#1a1a1a" stroke-width="1.6" stroke-linecap="round" stroke-linejoin="round"><path d="M15,0.8 L10.5,5 M9.2,4.2 L11.6,6.6 L7.2,14.6 L0.6,8.4 Z M3.4,9.2 L4.6,10"/><path d="M9,4.4 L11.4,6.8" stroke-width="3"/></g></svg>
<div class="a pt" style="left:1399.5px;top:22.4px;font-size:15px;letter-spacing:.2px;-webkit-text-stroke:.2px #111">Cleaning</div>
<div class="gd"></div>
<svg class="ic" style="left:1537px;top:23.5px;width:8px;height:13px" viewBox="0 0 8 13"><path d="M1,1 L6.5,6.2 L1,11.4" fill="none" stroke="#111" stroke-width="1.9" stroke-linecap="round" stroke-linejoin="round"/></svg>
</div>
<div class="row" style="top:941.8px;height:62px;background:#fff">
<div class="tog"><i></i></div>
<div class="a nm" style="left:127px;top:23.36px;letter-spacing:0.25px">ID - THE R APARTMENTS Mezzanine Studio<i class=pp></i> APT 1</div>
<div class="dot"></div>
<div class="a resp" style="left:752px;top:24.979999999999997px">RESPONDING</div>
<div class="pill" style="left:892.5px"></div>
<svg class="ic" style="left:911.5px;top:21px;width:14px;height:16px" viewBox="0 0 14 16"><g fill="none" stroke="#1a1a1a" stroke-width="1.6" stroke-linecap="round" stroke-linejoin="round"><rect x="1" y="2.8" width="12" height="12" rx="1.5"/><path d="M4,0.8V3M10,0.8V3M7,12.5V7.5M4.8,9.7L7,7.5L9.2,9.7"/></g><rect x="1" y="2.8" width="12" height="3" fill="#1a1a1a"/></svg>
<div class="a pt" style="left:931.8px;top:22.279999999999998px;font-size:15.5px">0</div>
<div class="pill" style="left:977.5px"></div>
<svg class="ic" style="left:996.5px;top:21px;width:14px;height:16px" viewBox="0 0 14 16"><g fill="none" stroke="#1a1a1a" stroke-width="1.6" stroke-linecap="round" stroke-linejoin="round"><rect x="1" y="2.8" width="12" height="12" rx="1.5"/><path d="M4,0.8V3M10,0.8V3M7,7.5V12.5M4.8,10.3L7,12.5L9.2,10.3"/></g><rect x="1" y="2.8" width="12" height="3" fill="#1a1a1a"/></svg>
<div class="a pt" style="left:1016.8px;top:22.279999999999998px;font-size:15.5px">0</div>
<div class="pill" style="left:1099.5px"></div>
<svg class="ic" style="left:1120px;top:22.5px;width:13px;height:14px" viewBox="0 0 13 14"><g fill="none" stroke="#1a1a1a" stroke-width="1.25" stroke-linecap="round"><circle cx="6.5" cy="4" r="3.2"/><path d="M0.8,13.5 V12.5 Q0.8,9.2 4,9.2 H9 Q12.2,9.2 12.2,12.5 V13.5"/></g></svg>
<div class="a pt" style="left:1135.3px;top:21.6px;font-size:15px;letter-spacing:-.3px"><svg style="display:inline-block;width:5.6px;height:11px;margin-top:-11px;vertical-align:baseline;overflow:visible" viewBox="0 0 5.6 11"><path d="M0.6,3.3 L3.4,1.3 V11" fill="none" stroke="#111" stroke-width="1.55" stroke-linejoin="round"/></svg>4</div>
<div class="pill" style="left:1239.5px"></div>
<svg class="ic" style="left:1261px;top:22.5px;width:13px;height:14px" viewBox="0 0 13 14"><g fill="none" stroke="#1a1a1a" stroke-width="1.4" stroke-linecap="round" stroke-linejoin="round"><path d="M0.7,0.7 H2 L3.5,9.5 H11 L12.3,3.5 H2.8"/></g><g fill="#1a1a1a"><circle cx="4.3" cy="12.6" r=".9"/><circle cx="10.3" cy="12.6" r=".9"/></g></svg>
<div class="a pt" style="left:1276.8px;top:21.6px;font-size:15px;letter-spacing:-.3px"><svg style="display:inline-block;width:5.6px;height:11px;margin-top:-11px;vertical-align:baseline;overflow:visible" viewBox="0 0 5.6 11"><path d="M0.6,3.3 L3.4,1.3 V11" fill="none" stroke="#111" stroke-width="1.55" stroke-linejoin="round"/></svg>2</div>
<div class="cl"></div>
<svg class="ic" style="left:1381px;top:22px;width:16px;height:15px" viewBox="0 0 16 15"><g fill="none" stroke="#1a1a1a" stroke-width="1.6" stroke-linecap="round" stroke-linejoin="round"><path d="M15,0.8 L10.5,5 M9.2,4.2 L11.6,6.6 L7.2,14.6 L0.6,8.4 Z M3.4,9.2 L4.6,10"/><path d="M9,4.4 L11.4,6.8" stroke-width="3"/></g></svg>
<div class="a pt" style="left:1399.5px;top:22.4px;font-size:15px;letter-spacing:.2px;-webkit-text-stroke:.2px #111">Cleaning</div>
<div class="gd"></div>
<svg class="ic" style="left:1537px;top:23.5px;width:8px;height:13px" viewBox="0 0 8 13"><path d="M1,1 L6.5,6.2 L1,11.4" fill="none" stroke="#111" stroke-width="1.9" stroke-linecap="round" stroke-linejoin="round"/></svg>
</div>
<div class="row" style="top:1003.88px;height:62px;background:#fff">
<div class="tog"><i></i></div>
<div class="a nm" style="left:127px;top:23.36px;letter-spacing:0.2px">ID - MASURAI<i class=pp></i> Pererenan the R Villa Masurai – 2BR Pool w/ Cinema</div>
<div class="dot"></div>
<div class="a resp" style="left:752px;top:24.979999999999997px">RESPONDING</div>
<div class="pill" style="left:892.5px"></div>
<svg class="ic" style="left:911.5px;top:21px;width:14px;height:16px" viewBox="0 0 14 16"><g fill="none" stroke="#1a1a1a" stroke-width="1.6" stroke-linecap="round" stroke-linejoin="round"><rect x="1" y="2.8" width="12" height="12" rx="1.5"/><path d="M4,0.8V3M10,0.8V3M7,12.5V7.5M4.8,9.7L7,7.5L9.2,9.7"/></g><rect x="1" y="2.8" width="12" height="3" fill="#1a1a1a"/></svg>
<div class="a pt" style="left:931.8px;top:22.279999999999998px;font-size:15.5px">0</div>
<div class="pill" style="left:977.5px"></div>
<svg class="ic" style="left:996.5px;top:21px;width:14px;height:16px" viewBox="0 0 14 16"><g fill="none" stroke="#1a1a1a" stroke-width="1.6" stroke-linecap="round" stroke-linejoin="round"><rect x="1" y="2.8" width="12" height="12" rx="1.5"/><path d="M4,0.8V3M10,0.8V3M7,7.5V12.5M4.8,10.3L7,12.5L9.2,10.3"/></g><rect x="1" y="2.8" width="12" height="3" fill="#1a1a1a"/></svg>
<div class="a pt" style="left:1016.8px;top:22.279999999999998px;font-size:15.5px">0</div>
<div class="pill" style="left:1099.5px"></div>
<svg class="ic" style="left:1120px;top:22.5px;width:13px;height:14px" viewBox="0 0 13 14"><g fill="none" stroke="#1a1a1a" stroke-width="1.25" stroke-linecap="round"><circle cx="6.5" cy="4" r="3.2"/><path d="M0.8,13.5 V12.5 Q0.8,9.2 4,9.2 H9 Q12.2,9.2 12.2,12.5 V13.5"/></g></svg>
<div class="a pt" style="left:1135.3px;top:21.6px;font-size:15px;letter-spacing:-.3px"><svg style="display:inline-block;width:5.6px;height:11px;margin-top:-11px;vertical-align:baseline;overflow:visible" viewBox="0 0 5.6 11"><path d="M0.6,3.3 L3.4,1.3 V11" fill="none" stroke="#111" stroke-width="1.55" stroke-linejoin="round"/></svg>7</div>
<div class="pill" style="left:1239.5px"></div>
<svg class="ic" style="left:1261px;top:22.5px;width:13px;height:14px" viewBox="0 0 13 14"><g fill="none" stroke="#1a1a1a" stroke-width="1.4" stroke-linecap="round" stroke-linejoin="round"><path d="M0.7,0.7 H2 L3.5,9.5 H11 L12.3,3.5 H2.8"/></g><g fill="#1a1a1a"><circle cx="4.3" cy="12.6" r=".9"/><circle cx="10.3" cy="12.6" r=".9"/></g></svg>
<div class="a pt" style="left:1276.8px;top:21.6px;font-size:15px;letter-spacing:-.3px"><svg style="display:inline-block;width:5.6px;height:11px;margin-top:-11px;vertical-align:baseline;overflow:visible" viewBox="0 0 5.6 11"><path d="M0.6,3.3 L3.4,1.3 V11" fill="none" stroke="#111" stroke-width="1.55" stroke-linejoin="round"/></svg><svg style="display:inline-block;width:5.6px;height:11px;margin-top:-11px;vertical-align:baseline;overflow:visible" viewBox="0 0 5.6 11"><path d="M0.6,3.3 L3.4,1.3 V11" fill="none" stroke="#111" stroke-width="1.55" stroke-linejoin="round"/></svg></div>
<div class="cl"></div>
<svg class="ic" style="left:1381px;top:22px;width:16px;height:15px" viewBox="0 0 16 15"><g fill="none" stroke="#1a1a1a" stroke-width="1.6" stroke-linecap="round" stroke-linejoin="round"><path d="M15,0.8 L10.5,5 M9.2,4.2 L11.6,6.6 L7.2,14.6 L0.6,8.4 Z M3.4,9.2 L4.6,10"/><path d="M9,4.4 L11.4,6.8" stroke-width="3"/></g></svg>
<div class="a pt" style="left:1399.5px;top:22.4px;font-size:15px;letter-spacing:.2px;-webkit-text-stroke:.2px #111">Cleaning</div>
<div class="gd"></div>
<svg class="ic" style="left:1537px;top:23.5px;width:8px;height:13px" viewBox="0 0 8 13"><path d="M1,1 L6.5,6.2 L1,11.4" fill="none" stroke="#111" stroke-width="1.9" stroke-linecap="round" stroke-linejoin="round"/></svg>
</div>
<div style="position:absolute;left:1840px;top:502px;width:62px;height:62px;border-radius:50%;background:#e9e0bb;filter:blur(1.5px)"></div><div style="position:absolute;left:1872px;top:497px;width:40px;height:71px;border-radius:14px 0 0 14px;background:#e9e0bb;filter:blur(1.5px)"></div>
<div style="position:absolute;left:1847px;top:509px;width:47px;height:47px;border-radius:50%;background:#c5a52a"></div>
<svg class="ic" style="left:1860px;top:520px;width:18px;height:26px" viewBox="0 0 18 26"><path d="M2.5,6 Q0,9 0.5,13 Q1.5,18 9,25 Q16.5,18 17.5,13 Q18,9 15.5,6 Q14,10 9,10.5 Q4,10 2.5,6 Z" fill="#111"/><circle cx="9" cy="10" r="4.2" fill="none" stroke="#e8c640" stroke-width="1.6"/><circle cx="9" cy="10" r="2.2" fill="#111"/><path d="M6,4 L7.5,1 L9,3 L10.5,1 L12,4 Z" fill="#e8c640"/></svg>
<div id="scr" style="z-index:5"><div id="thumb"></div></div>
<svg class="ic" style="left:906px;top:379px;width:14px;height:21px" viewBox="0 0 14 21"><path d="M1,1 L1,15.5 L4.5,12.3 L7,18 L9.3,17 L6.9,11.4 L11.5,11.4 Z" fill="#111" stroke="#fff" stroke-width="1.2" stroke-linejoin="round"/></svg>
</body></html>
